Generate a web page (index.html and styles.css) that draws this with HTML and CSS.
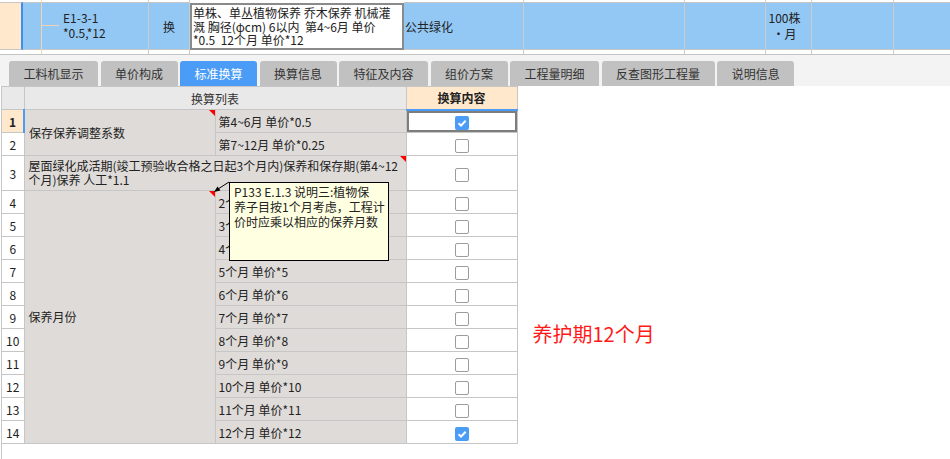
FILE: index.html
```html
<!DOCTYPE html>
<html>
    <head>
        <meta charset="UTF-8">
        <title>标准换算</title>
        <link rel="stylesheet" href="styles.css">
    </head>
    <body>
        <div class="sheet">
            <div class="col col-head"><div class="fill"></div></div>
            <div class="col col-tree"><div class="fill"></div></div>
            <div class="col col-code"><div class="fill"><span class="branch"></span><span class="code">E1-3-1<br>*0.5,*12</span></div></div>
            <div class="col col-type"><div class="fill center">换</div></div>
            <div class="col col-name"><div class="edit">单株、单丛植物保养 乔木保养 机械灌<br>溉 胸径(φcm) 6以内&nbsp; 第4~6月 单价<br>*0.5&nbsp; 12个月 单价*12</div></div>
            <div class="col col-spec"><div class="fill">公共绿化</div></div>
            <div class="col col-w161"><div class="fill"></div></div>
            <div class="col col-w81"><div class="fill"></div></div>
            <div class="col col-unit"><div class="fill unit">100株<br>・月</div></div>
            <div class="col col-w82"><div class="fill"></div></div>
            <div class="col col-rest"><div class="fill"></div></div>
        </div>

        <div class="tabs">
            <span class="tab">工料机显示</span>
            <span class="tab">单价构成</span>
            <span class="tab active">标准换算</span>
            <span class="tab">换算信息</span>
            <span class="tab">特征及内容</span>
            <span class="tab">组价方案</span>
            <span class="tab">工程量明细</span>
            <span class="tab">反查图形工程量</span>
            <span class="tab">说明信息</span>
        </div>

        <div class="panel">
            <table class="grid">
                <colgroup>
                    <col class="c-num">
                    <col class="c-group">
                    <col class="c-item">
                    <col class="c-check">
                </colgroup>
                <tr class="head">
                    <th class="num"></th>
                    <th colspan="2">换算列表</th>
                    <th class="pick">换算内容</th>
                </tr>
                <tr>
                    <td class="num current">1</td>
                    <td class="group flag" rowspan="2">保存保养调整系数</td>
                    <td class="item">第4~6月 单价*0.5</td>
                    <td class="check selected"><span class="box on"><svg viewBox="0 0 14 14" width="14" height="14"><path d="M3.6 7.3 L6 9.6 L10.6 4.8" fill="none" stroke="#fff" stroke-width="2"/></svg></span></td>
                </tr>
                <tr>
                    <td class="num">2</td>
                    <td class="item">第7~12月 单价*0.25</td>
                    <td class="check"><span class="box"></span></td>
                </tr>
                <tr class="tall">
                    <td class="num">3</td>
                    <td class="group flag" colspan="2">屋面绿化成活期(竣工预验收合格之日起3个月内)保养和保存期(第4~12<br>个月)保养 人工*1.1</td>
                    <td class="check"><span class="box"></span></td>
                </tr>
                <tr>
                    <td class="num">4</td>
                    <td class="group flag" rowspan="11">保养月份</td>
                    <td class="item">2个月 单价*2</td>
                    <td class="check"><span class="box"></span></td>
                </tr>
                <tr>
                    <td class="num">5</td>
                    <td class="item">3个月 单价*3</td>
                    <td class="check"><span class="box"></span></td>
                </tr>
                <tr>
                    <td class="num">6</td>
                    <td class="item">4个月 单价*4</td>
                    <td class="check"><span class="box"></span></td>
                </tr>
                <tr>
                    <td class="num">7</td>
                    <td class="item">5个月 单价*5</td>
                    <td class="check"><span class="box"></span></td>
                </tr>
                <tr>
                    <td class="num">8</td>
                    <td class="item">6个月 单价*6</td>
                    <td class="check"><span class="box"></span></td>
                </tr>
                <tr>
                    <td class="num">9</td>
                    <td class="item">7个月 单价*7</td>
                    <td class="check"><span class="box"></span></td>
                </tr>
                <tr>
                    <td class="num">10</td>
                    <td class="item">8个月 单价*8</td>
                    <td class="check"><span class="box"></span></td>
                </tr>
                <tr>
                    <td class="num">11</td>
                    <td class="item">9个月 单价*9</td>
                    <td class="check"><span class="box"></span></td>
                </tr>
                <tr>
                    <td class="num">12</td>
                    <td class="item">10个月 单价*10</td>
                    <td class="check"><span class="box"></span></td>
                </tr>
                <tr>
                    <td class="num">13</td>
                    <td class="item">11个月 单价*11</td>
                    <td class="check"><span class="box"></span></td>
                </tr>
                <tr>
                    <td class="num">14</td>
                    <td class="item">12个月 单价*12</td>
                    <td class="check"><span class="box on"><svg viewBox="0 0 14 14" width="14" height="14"><path d="M3.6 7.3 L6 9.6 L10.6 4.8" fill="none" stroke="#fff" stroke-width="2"/></svg></span></td>
                </tr>
            </table>

            <p class="note">养护期12个月</p>
        </div>

        <!-- comment tip for the 保养月份 row -->
        <svg class="pointer" width="20" height="16" viewBox="0 0 20 16">
            <path d="M17 2 L6 9" stroke="#000" stroke-width="1" fill="none"/>
            <path d="M2 12 L5.5 6.5 L8.5 10.5 Z" fill="#000"/>
        </svg>
        <div class="tip">P133 E.1.3 说明三:植物保<br>养子目按1个月考虑，工程计<br>价时应乘以相应的保养月数</div>
    </body>
</html>
```

FILE: styles.css
```css
*
{
    box-sizing: border-box;
}

body
{
    position: relative;
    display: flex;
    flex-direction: column;
    height: 100vh;
    margin: 0;
    overflow: hidden;
    font-family: "Noto Sans CJK SC", sans-serif;
    font-size: 12px;
    color: #222;
    background: #fff;
}

/* current row of the estimate sheet */

.sheet
{
    display: flex;
    flex: none;
    height: 54px;
}

.col
{
    flex: none;
    height: 54px;
    border-right: 1px solid #cbcbcb;
}

.fill
{
    display: flex;
    align-items: center;
    height: 48px;
    margin-top: 2px;
    border-top: 1px solid #c6c6c6;
    border-bottom: 1px solid #c6c6c6;
    background: #93c8f5;
}

.center
{
    justify-content: center;
}

.col-head
{
    width: 23px;
    border-right: none;
}

.col-head .fill
{
    background: #ffe8cc;
    border-right: 2px solid #3d8ef0;
}

.col-tree
{
    width: 19px;
    border-right-color: #f3d3ad;
}

.col-code
{
    width: 107px;
}

.branch
{
    width: 17px;
    margin-top: -1px;
    margin-right: 4px;
    border-top: 1px solid #f3d3ad;
}

.code
{
    line-height: 15px;
    margin-top: -2px;
}

.col-type
{
    width: 41px;
}

.col-name
{
    width: 214px;
    border-right: none;
}

.edit
{
    height: 47px;
    margin-top: 3px;
    padding: 1px 1px 0;
    border: 2px solid #8a8a8a;
    background: #fff;
    line-height: 13.5px;
    white-space: nowrap;
}

.col-spec
{
    width: 120px;
}

.col-spec .fill
{
    padding-left: 1px;
}

.col-w161
{
    width: 161px;
}

.col-w81
{
    width: 81px;
}

.col-unit
{
    width: 46px;
}

.unit
{
    justify-content: center;
    padding-right: 8px;
    margin-top: 2px;
    line-height: 16px;
    text-align: center;
}

.col-w82
{
    width: 82px;
}

.col-rest
{
    flex: 1;
    border-right: none;
}

/* tab strip */

.tabs
{
    display: flex;
    flex: none;
    height: 32px;
    padding: 6px 0 0 9px;
    border-top: 1px solid #c4c4c4;
    background: #f3f3f3;
}

.tab
{
    height: 25px;
    margin-right: 2.5px;
    padding: 0 14.5px;
    border-radius: 3px 3px 0 0;
    background: #c1c1c1;
    color: #333;
    line-height: 25px;
    white-space: nowrap;
}

.tab.active
{
    background: #4a9cf6;
    color: #fff;
}

/* conversion grid */

.panel
{
    display: flex;
    align-items: flex-start;
    flex: 1;
    margin-left: 1px;
    border-left: 1px solid #c6c6c6;
}

.grid
{
    width: 515px;
    table-layout: fixed;
    border-collapse: collapse;
    border-left: hidden;
}

.c-num
{
    width: 22px;
}

.c-group
{
    width: 191px;
}

.c-item
{
    width: 191px;
}

.c-check
{
    width: 111px;
}

.grid th,
.grid td
{
    height: 23px;
    padding: 0;
    border: 1px solid #c6c6c6;
    white-space: nowrap;
    overflow: hidden;
}

.grid .tall td
{
    height: 35px;
}

.head th
{
    background: #e9e9e9;
    font-weight: normal;
    color: #333;
}

.head .pick
{
    background: #ffe8cc;
    border-bottom: 2px solid #4a9cf6;
    font-weight: bold;
    color: #222;
}

.num
{
    background: #fff;
    text-align: center;
}

.num.current
{
    background: #ffe8cc;
    border-right: 2px solid #4a9cf6;
    font-weight: bold;
}

.group
{
    position: relative;
    padding-left: 4px !important;
    background: #dfdbd8;
    line-height: 14px;
}

.flag::after
{
    content: "";
    position: absolute;
    top: 0;
    right: 0;
    border-top: 6px solid #f00;
    border-left: 6px solid transparent;
}

.item
{
    padding-left: 3px !important;
    background: #dfdbd8;
}

.check
{
    background: #fff;
    text-align: center;
}

.check.selected
{
    box-shadow: inset 0 0 0 2px #7d7d7d;
}

.box
{
    display: inline-block;
    width: 14px;
    height: 14px;
    vertical-align: middle;
    border: 1px solid #9c9c9c;
    border-radius: 2px;
    background: #fff;
}

.box.on
{
    border: none;
    background: #4a9cf6;
}

.box svg
{
    display: block;
}

.note
{
    margin: 236px 0 0 15px;
    color: #ff1a1a;
    font-size: 20px;
    line-height: 24px;
}

/* comment tooltip */

.tip
{
    position: absolute;
    left: 229px;
    top: 182px;
    width: 160px;
    height: 79px;
    padding: 1px 0 0 4px;
    border: 1px solid #000;
    background: #ffffe1;
    line-height: 15px;
    white-space: nowrap;
}

.pointer
{
    position: absolute;
    left: 212px;
    top: 180px;
}
```
